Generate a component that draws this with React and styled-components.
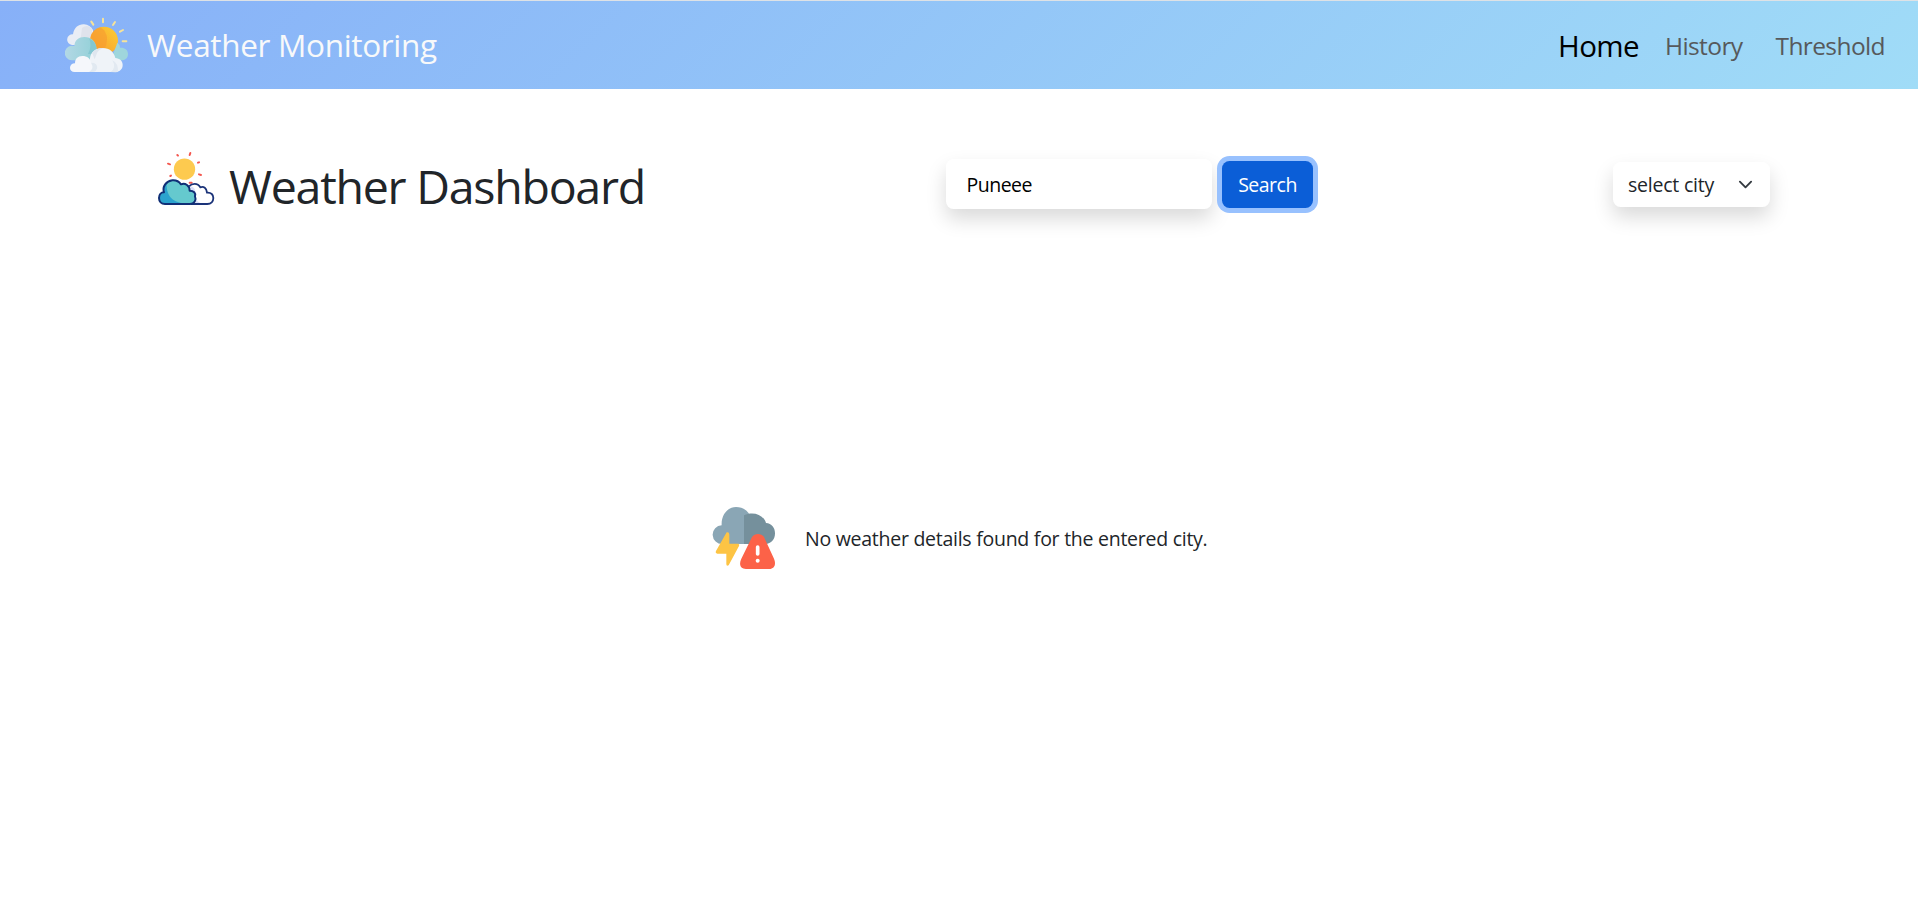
import React from "react";
import styled, { createGlobalStyle } from "styled-components";

const GlobalStyle = createGlobalStyle`
  *, *::before, *::after { box-sizing: border-box; }
  body {
    margin: 0;
    background: #fff;
    color: #212529;
    font-family: "Open Sans", "Noto Sans", sans-serif;
    font-size: 19.5px;
    line-height: 1.5;
  }
`;

const Page = styled.div`
  display: flex;
  flex-direction: column;
  height: 908px;
  overflow: hidden;
`;

const Navbar = styled.nav`
  display: flex;
  align-items: center;
  justify-content: space-between;
  height: 89px;
  padding: 0 33px 0 65px;
  border-top: 1px solid #dee2e6;
  background: linear-gradient(135deg, #87b0f8 0%, #a0dcf7 100%);
`;

const Brand = styled.a`
  display: flex;
  align-items: center;
  gap: 18px;
  color: #f8f9fa;
  font-size: 31.5px;
  letter-spacing: -0.32px;
  white-space: nowrap;
`;

const NavLinks = styled.div`
  display: flex;
  align-items: center;
  padding-top: 2px;
`;

const NavItem = styled.a`
  margin-left: ${(p) => p.$gap || 0}px;
  font-size: ${(p) => (p.$active ? "29.5px" : "24.5px")};
  letter-spacing: -0.6px;
  color: ${(p) => (p.$active ? "#000" : "#56595c")};
`;

const Toolbar = styled.header`
  display: flex;
  align-items: center;
  height: 51px;
  margin: 70px 148px 0 157px;
`;

const Title = styled.h1`
  display: flex;
  align-items: center;
  gap: 14px;
  width: 789px;
  margin: 0;
  font-size: 46.5px;
  font-weight: 400;
  line-height: 1.2;
  letter-spacing: -1.25px;
  white-space: nowrap;

  svg { margin-bottom: 13px; }
  span { padding-top: 5px; }
`;

const SearchForm = styled.div`
  display: flex;
  align-items: center;
  gap: 10px;
`;

const CityInput = styled.input`
  width: 266px;
  height: 50px;
  margin-bottom: 1px;
  padding: 1px 20.5px 0;
  border: 0;
  border-radius: 7.5px;
  outline: 0;
  background: #fff;
  color: #000;
  font: inherit;
  letter-spacing: -0.5px;
  box-shadow: 0 10px 20px rgba(0, 0, 0, 0.15);
`;

const SearchButton = styled.button`
  width: 91px;
  height: 47px;
  padding: 1px 0 0;
  border: 0;
  border-radius: 7.5px;
  background: #0b5ed7;
  color: #fff;
  font: inherit;
  letter-spacing: -0.5px;
  box-shadow: 0 0 0 5px #98c1fe;
`;

const CitySelect = styled.div`
  display: flex;
  align-items: center;
  justify-content: space-between;
  width: 157px;
  height: 45px;
  margin-left: auto;
  padding: 0 17px 0 15px;
  border-radius: 7.5px;
  background: #fff;
  letter-spacing: -0.22px;
  white-space: nowrap;
  box-shadow: 0 10px 20px rgba(0, 0, 0, 0.15);
`;

const Message = styled.section`
  display: flex;
  align-items: center;
  gap: 29px;
  margin: 296px 0 0 712px;
  letter-spacing: -0.26px;

  span { padding-top: 1px; }
`;

const BrandIcon = () => (
  <svg width="64" height="56" viewBox="45 51 192 168">
    <defs>
      <linearGradient id="sun" x1="0" y1="1" x2="1" y2="0">
        <stop offset="0" stopColor="#f9962f" />
        <stop offset="1" stopColor="#fbcf33" />
      </linearGradient>
      <linearGradient id="teal" x1="0" y1="0" x2="1" y2="0">
        <stop offset="0" stopColor="#b3d8e5" />
        <stop offset="1" stopColor="#8fd0d6" />
      </linearGradient>
    </defs>
    <g stroke="#f6e39a" strokeWidth="6" strokeLinecap="round">
      <path d="M124 65l6 9M159 56v11M195 66l-6 9M219 90l-9 5M229 124h-11" />
    </g>
    <path d="M66 135a16 16 0 0 1 3-32c3-20 17-31 33-30 12 1 22 7 27 17v45z" fill="#e9edf5" />
    <path d="M96 84q14-12 29 0l3 32H92z" fill="#dfe3ec" />
    <circle cx="162" cy="122" r="42" fill="url(#sun)" />
    <path d="M122 108q8-21 29-26 20 12 20 36 0 14-6 27l-20 2z" fill="#f79d30" opacity=".65" />
    <path d="M202 128q8 5 8 15c14-1 24 6 24 19s-9 19-21 19h-30z" fill="#9fd6dc" />
    <path d="M66 181a22 22 0 1 1 7-43c1-18 14-27 30-27 21 0 34 13 36 31l6 39z" fill="url(#teal)" />
    <path d="M118 116q18 8 21 26l3 20h-28q13-25 4-46z" fill="#83c7d2" />
    <path d="M120 175c2-20 17-31 38-31 21 0 34 12 38 30 13 1 22 9 22 21 0 13-9 21-23 21h-79z" fill="#eff3f8" />
    <path d="M126 158q14-16 36-14-18 4-23 20l-5 14z" fill="#dfe6ef" />
    <path d="M187 181q18 8 17 35-5 1-22 0 18-13 5-35z" fill="#e2e9f1" />
    <path d="M74 216c-9 0-14-6-14-13s6-13 15-13c0-13 8-22 22-22 15 0 24 8 26 20 13 0 19 6 19 14 0 9-6 14-16 14z" fill="#f5f7fb" />
    <path d="M123 188q18-1 19 14-1 14-16 14h-9q17-10 6-28z" fill="#e1e9f1" />
  </svg>
);

const DashboardIcon = () => (
  <svg width="58" height="55" viewBox="36 33 174 165">
    <g stroke="#f4574f" strokeWidth="6" strokeLinecap="round">
      <path d="M134 45l2-6M97 45l2 2M69 71l6 2M159 68l3-1M162 103l6 2M76 108l2-1M134 128h6" />
    </g>
    <circle cx="118.500" cy="87.500" r="32" fill="#fdca4f" />
    <path d="M132 139c8-9 26-12 34 3 10-4 19 2 20 16 13-1 19 6 19 16s-7 18-18 18h-50z" fill="#fff" />
    <path d="M137 139q-3 11 11 20l6 31h14q-15-4-17-24 3-24-14-27z" fill="#dadffb" />
    <path d="M132 139c8-9 26-12 34 3 10-4 19 2 20 16 13-1 19 6 19 16s-7 18-18 18h-50" fill="none" stroke="#1b3379" strokeWidth="5.500" strokeLinejoin="round" />
    <path d="M60 192c-11 0-18-8-18-18s6-17 15-17c-6-18 7-34 25-36 12-1 21 5 26 12 13-5 26 4 26 19 12 0 19 7 16 17 5 11-2 23-15 23z" fill="#65c9ce" />
    <path d="M60 190c-10 0-16-7-16-16s6-15 16-16c-6-12-2-22 5-29-1 24 5 54 48 61z" fill="#2ba3ce" />
    <path d="M60 192c-11 0-18-8-18-18s6-17 15-17c-6-18 7-34 25-36 12-1 21 5 26 12 13-5 26 4 26 19 12 0 19 7 16 17 5 11-2 23-15 23z" fill="none" stroke="#102f76" strokeWidth="6" strokeLinejoin="round" />
  </svg>
);

const AlertIcon = () => (
  <svg width="64" height="64" viewBox="36 33 192 192">
    <path d="M132 147H67a28 28 0 0 1-2-56c-2-30 17-55 43-55 19 0 34 9 41 24z" fill="#8aa6b5" />
    <path d="M132 61c25-13 58-4 66 23 17 1 27 14 27 31 0 18-11 32-29 32h-64z" fill="#75909c" />
    <path d="M80 112q8-2 8 7v27h27q5 2 2 7l-31 58q-7 4-7-4v-31H52q-7-2-4-8z" fill="#fdc444" />
    <path d="M156 126c8-12 28-12 36 0l29 63c9 19 2 33-13 33h-70c-17 0-22-14-14-31z" fill="#fc6248" />
    <path d="M173 156v21" stroke="#fff" strokeWidth="11" strokeLinecap="round" />
    <circle cx="173" cy="197.500" r="6" fill="#fff" />
  </svg>
);

const Chevron = () => (
  <svg width="15" height="15" viewBox="0 0 16 16">
    <path d="m2 5 6 6 6-6" fill="none" stroke="#343a40" strokeWidth="2" strokeLinecap="round" strokeLinejoin="round" />
  </svg>
);

export default function App() {
  return (
    <Page>
      <GlobalStyle />
      <Navbar>
        <Brand>
          <BrandIcon />
          <span>Weather Monitoring</span>
        </Brand>
        <NavLinks>
          <NavItem $active>Home</NavItem>
          <NavItem $gap={26}>History</NavItem>
          <NavItem $gap={33}>Threshold</NavItem>
        </NavLinks>
      </Navbar>
      <Toolbar>
        <Title>
          <DashboardIcon />
          <span>Weather Dashboard</span>
        </Title>
        <SearchForm>
          <CityInput defaultValue="Puneee" />
          <SearchButton>Search</SearchButton>
        </SearchForm>
        <CitySelect>
          <span>select city</span>
          <Chevron />
        </CitySelect>
      </Toolbar>
      <Message>
        <AlertIcon />
        <span>No weather details found for the entered city.</span>
      </Message>
    </Page>
  );
}
